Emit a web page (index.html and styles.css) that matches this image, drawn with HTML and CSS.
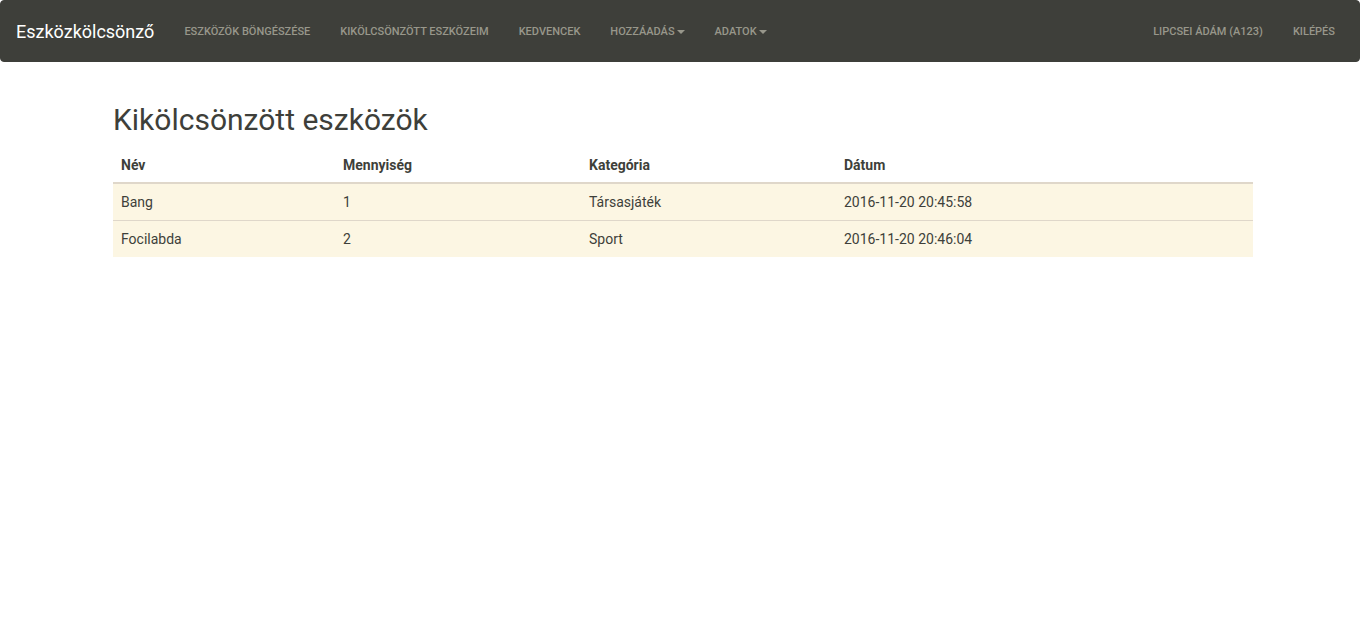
FILE: index.html
```html
<!DOCTYPE html>
<html lang="hu">
<head>
<meta charset="utf-8">
<title>Eszközkölcsönző</title>
<link rel="stylesheet" href="styles.css">
</head>
<body>
<nav class="navbar">
  <a class="brand" href="#">Eszközkölcsönző</a>
  <ul class="nav">
    <li><a href="#">Eszközök böngészése</a></li>
    <li><a href="#">Kikölcsönzött eszközeim</a></li>
    <li><a href="#">Kedvencek</a></li>
    <li><a href="#">Hozzáadás<span class="caret"></span></a></li>
    <li><a href="#">Adatok<span class="caret"></span></a></li>
  </ul>
  <ul class="nav nav-right">
    <li><a href="#">Lipcsei Ádám (A123)</a></li>
    <li><a href="#">Kilépés</a></li>
  </ul>
</nav>
<main class="container">
  <h2 class="title">Kikölcsönzött eszközök</h2>
  <table class="table">
    <colgroup>
      <col class="c1"><col class="c2"><col class="c3"><col class="c4">
    </colgroup>
    <thead>
      <tr><th>Név</th><th>Mennyiség</th><th>Kategória</th><th>Dátum</th></tr>
    </thead>
    <tbody>
      <tr class="warning"><td>Bang</td><td>1</td><td>Társasjáték</td><td>2016-11-20 20:45:58</td></tr>
      <tr class="warning"><td>Focilabda</td><td>2</td><td>Sport</td><td>2016-11-20 20:46:04</td></tr>
    </tbody>
  </table>
</main>
</body>
</html>
```
FILE: styles.css
```css
* { box-sizing: border-box; }
html, body { margin: 0; padding: 0; }
body {
  font-family: Roboto, "Liberation Sans", Arial, sans-serif;
  font-size: 14px;
  line-height: 1.42857;
  color: #3e3f3a;
  background: #fff;
}
a { text-decoration: none; }
.navbar {
  display: flex;
  align-items: stretch;
  height: 62px;
  background: #3e3f3a;
  border: 1px solid #3e3f3a;
  border-radius: 4px;
  padding: 1px 9px 0 0;
}
.brand {
  display: flex;
  align-items: center;
  padding: 0 15px;
  color: #fff;
  font-size: 18px;
  line-height: 20px;
}
.nav {
  display: flex;
  list-style: none;
  margin: 0;
  padding: 0;
}
.nav li { display: flex; }
.nav a {
  display: flex;
  align-items: center;
  padding: 0 15px;
  color: #98978b;
  font-size: 11px;
  font-weight: 500;
  text-transform: uppercase;
  line-height: 20px;
}
.nav-right { margin-left: auto; }
.caret {
  display: inline-block;
  width: 0;
  height: 0;
  margin-left: 2px;
  border-top: 4px solid #98978b;
  border-left: 4px solid transparent;
  border-right: 4px solid transparent;
}
.container {
  width: 1140px;
  margin: 0 0 0 113px;
}
.title {
  font-size: 30px;
  font-weight: 400;
  line-height: 1.1;
  margin: 41px 0 10px;
  color: #3e3f3a;
}
.table {
  width: 100%;
  border-collapse: collapse;
  border-spacing: 0;
}
.c1 { width: 222px; }
.c2 { width: 246px; }
.c3 { width: 255px; }
.table th, .table td {
  padding: 8px;
  text-align: left;
  line-height: 20px;
  vertical-align: top;
}
.table th {
  font-weight: 700;
  padding: 9px 8px 7px;
  border-bottom: 2px solid #dfd7ca;
}
.table td { border-top: 1px solid #dfd7ca; }
.table thead + tbody tr:first-child td { border-top: 0; }
.table tr.warning td { background: #fcf6e3; }
```
